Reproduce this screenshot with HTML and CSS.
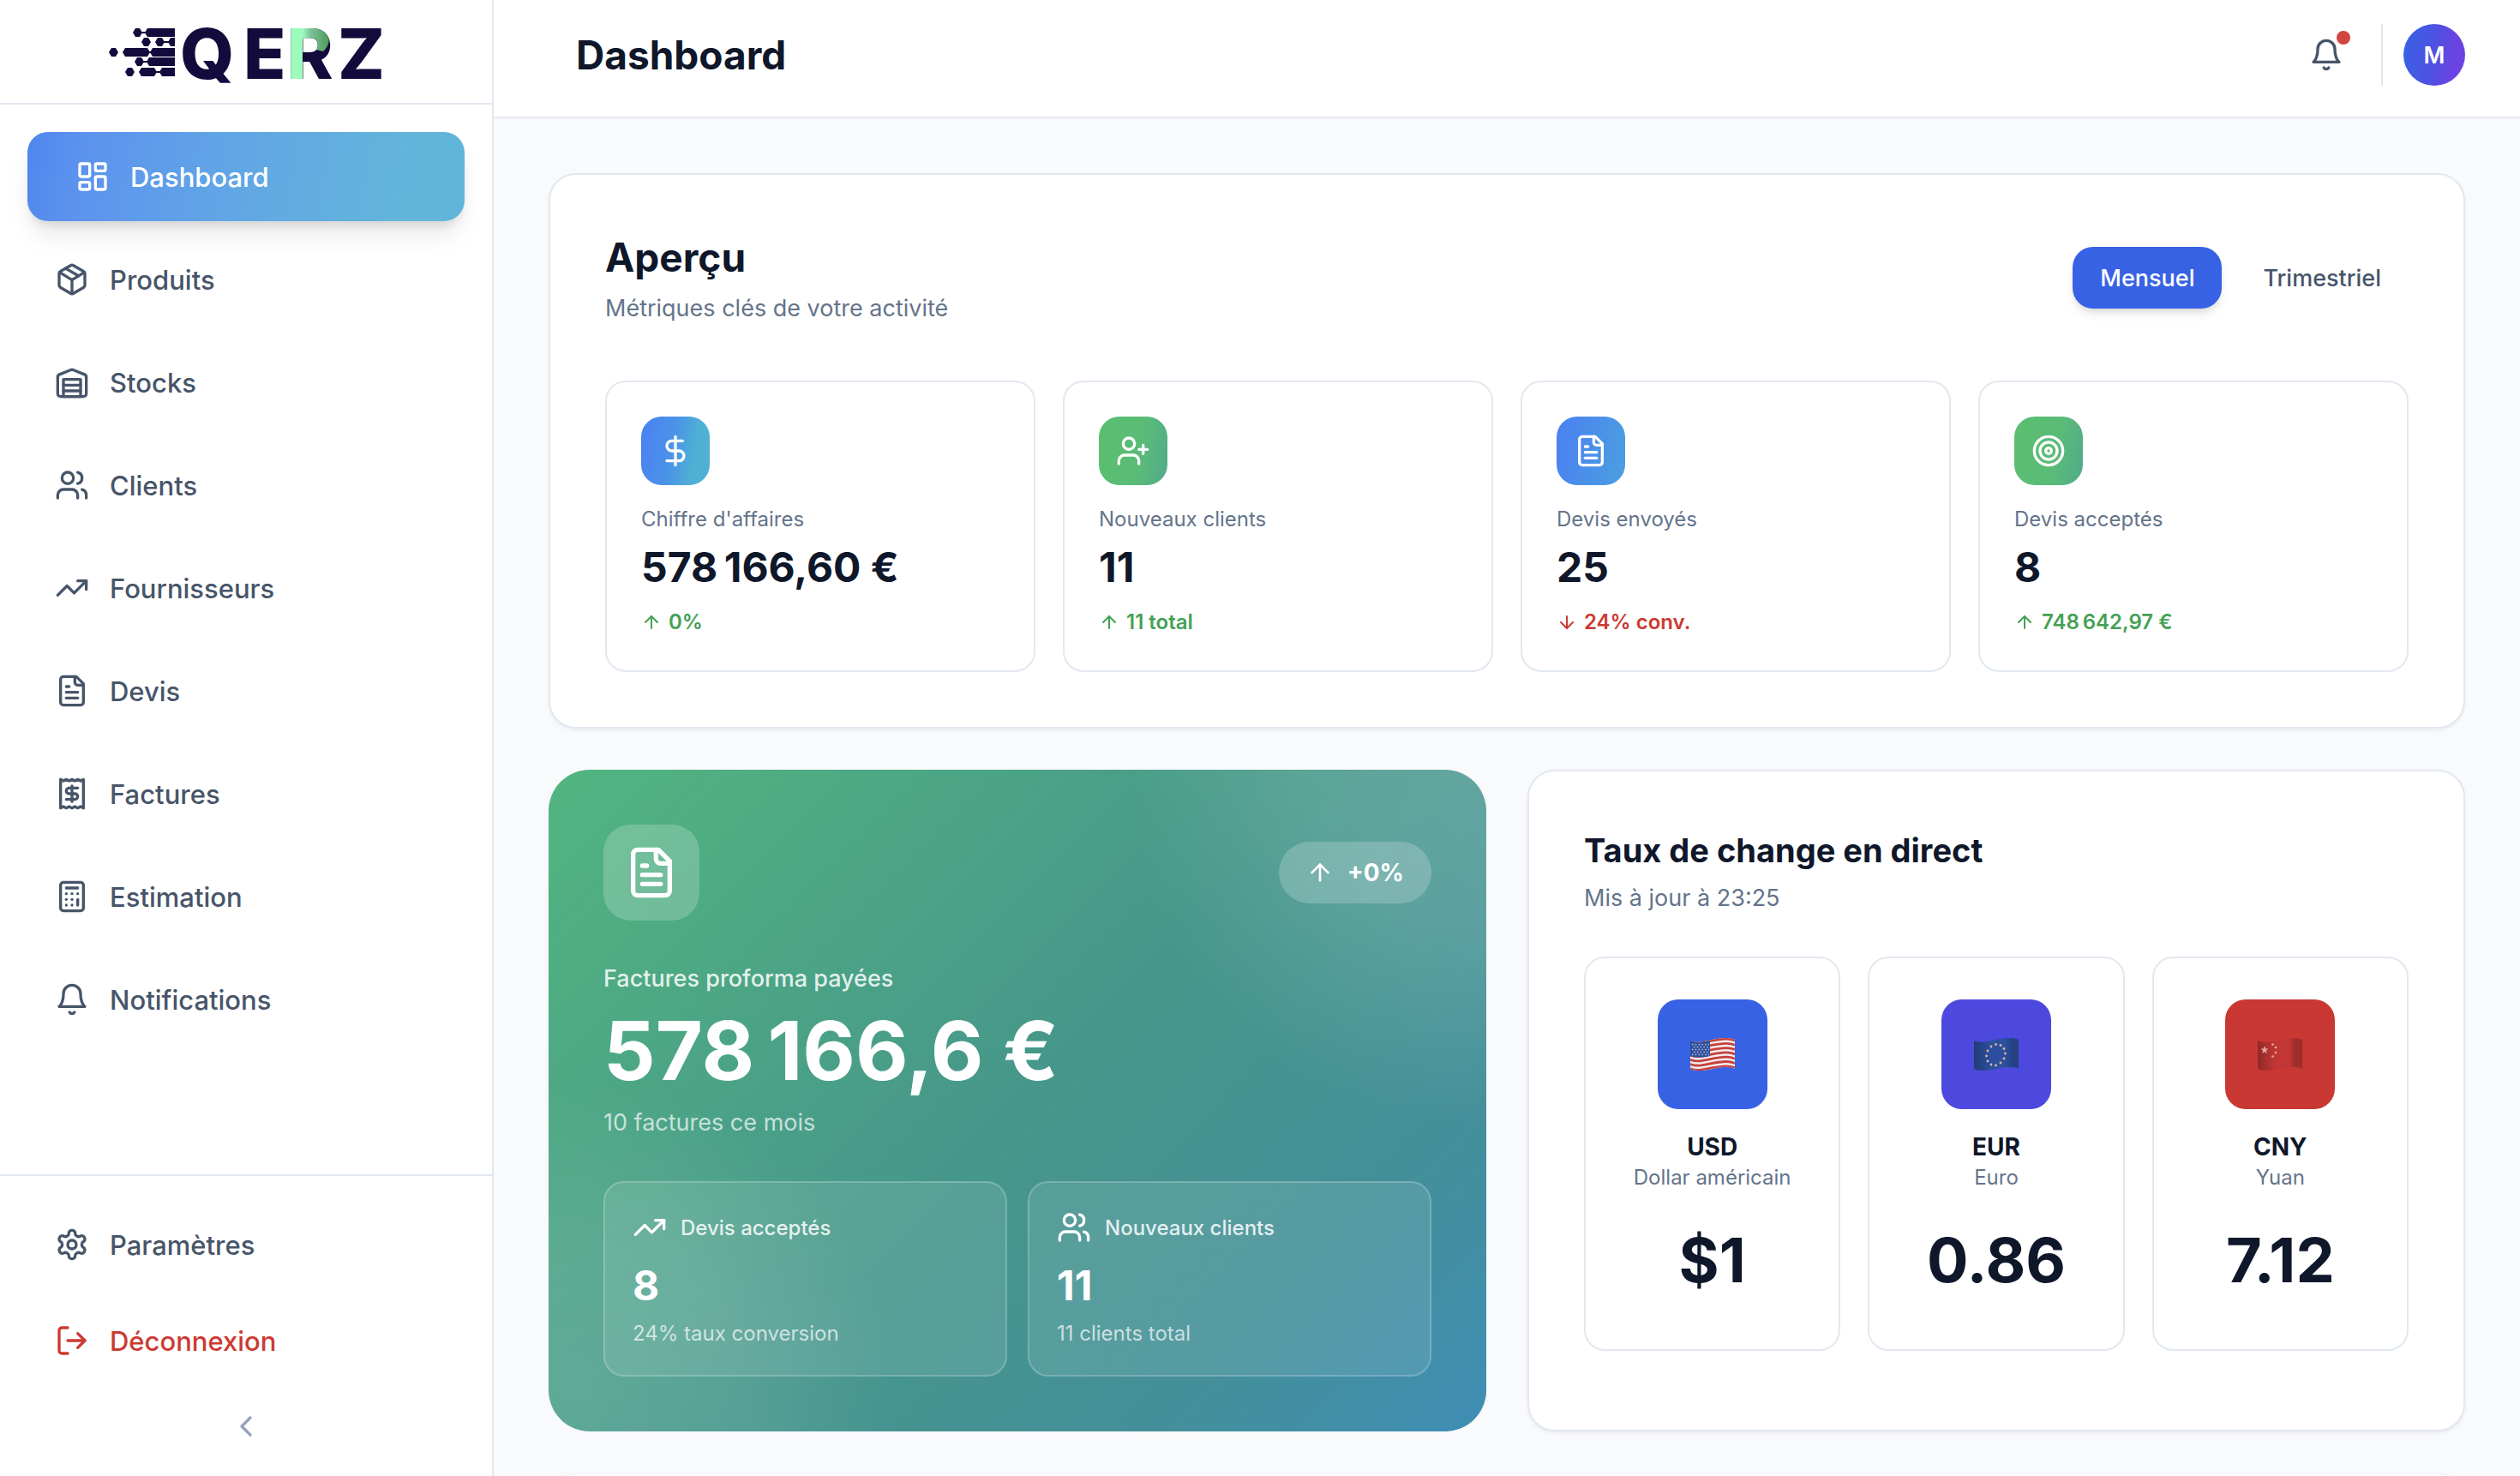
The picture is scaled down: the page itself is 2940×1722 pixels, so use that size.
FILE: index.html
```html
<!DOCTYPE html>
<html lang="fr">
<head>
  <meta charset="UTF-8" />
  <meta name="viewport" content="width=device-width, initial-scale=1.0" />
  <title>Dashboard - QERZ</title>
  <link rel="stylesheet" href="styles.css">
</head>
<body>

  <!-- Icons -->
  <svg class="sprite" aria-hidden="true">
    <symbol id="i-dashboard" viewBox="0 0 24 24"><rect width="7" height="9" x="3" y="3" rx="1"/><rect width="7" height="5" x="14" y="3" rx="1"/><rect width="7" height="9" x="14" y="12" rx="1"/><rect width="7" height="5" x="3" y="16" rx="1"/></symbol>
    <symbol id="i-package" viewBox="0 0 24 24"><path d="M11 21.73a2 2 0 0 0 2 0l7-4A2 2 0 0 0 21 16V8a2 2 0 0 0-1-1.73l-7-4a2 2 0 0 0-2 0l-7 4A2 2 0 0 0 3 8v8a2 2 0 0 0 1 1.73z"/><path d="M12 22V12"/><path d="m3.3 7 7.703 4.734a2 2 0 0 0 1.994 0L20.7 7"/><path d="m7.5 4.27 9 5.15"/></symbol>
    <symbol id="i-warehouse" viewBox="0 0 24 24"><path d="M22 8.35V20a2 2 0 0 1-2 2H4a2 2 0 0 1-2-2V8.35A2 2 0 0 1 3.26 6.5l8-3.2a2 2 0 0 1 1.48 0l8 3.2A2 2 0 0 1 22 8.35Z"/><path d="M6 18h12"/><path d="M6 14h12"/><rect width="12" height="12" x="6" y="10"/></symbol>
    <symbol id="i-users" viewBox="0 0 24 24"><path d="M16 21v-2a4 4 0 0 0-4-4H6a4 4 0 0 0-4 4v2"/><circle cx="9" cy="7" r="4"/><path d="M22 21v-2a4 4 0 0 0-3-3.87"/><path d="M16 3.13a4 4 0 0 1 0 7.75"/></symbol>
    <symbol id="i-trending" viewBox="0 0 24 24"><path d="M22 7 13.5 15.5 8.5 10.5 2 17"/><path d="M16 7h6v6"/></symbol>
    <symbol id="i-file" viewBox="0 0 24 24"><path d="M15 2H6a2 2 0 0 0-2 2v16a2 2 0 0 0 2 2h12a2 2 0 0 0 2-2V7Z"/><path d="M14 2v4a2 2 0 0 0 2 2h4"/><path d="M10 9H8"/><path d="M16 13H8"/><path d="M16 17H8"/></symbol>
    <symbol id="i-receipt" viewBox="0 0 24 24"><path d="M4 2v20l2-1 2 1 2-1 2 1 2-1 2 1 2-1 2 1V2l-2 1-2-1-2 1-2-1-2 1-2-1-2 1Z"/><path d="M16 8h-6a2 2 0 1 0 0 4h4a2 2 0 1 1 0 4H8"/><path d="M12 17.5v-11"/></symbol>
    <symbol id="i-calculator" viewBox="0 0 24 24"><rect width="16" height="20" x="4" y="2" rx="2"/><path d="M8 6h8"/><path d="M16 14v4"/><path d="M16 10h.01"/><path d="M12 10h.01"/><path d="M8 10h.01"/><path d="M12 14h.01"/><path d="M8 14h.01"/><path d="M12 18h.01"/><path d="M8 18h.01"/></symbol>
    <symbol id="i-bell" viewBox="0 0 24 24"><path d="M6 8a6 6 0 0 1 12 0c0 7 3 9 3 9H3s3-2 3-9"/><path d="M10.3 21a1.94 1.94 0 0 0 3.4 0"/></symbol>
    <symbol id="i-settings" viewBox="0 0 24 24"><path d="M12.22 2h-.44a2 2 0 0 0-2 2v.18a2 2 0 0 1-1 1.73l-.43.25a2 2 0 0 1-2 0l-.15-.08a2 2 0 0 0-2.73.73l-.22.38a2 2 0 0 0 .73 2.73l.15.1a2 2 0 0 1 1 1.72v.51a2 2 0 0 1-1 1.74l-.15.09a2 2 0 0 0-.73 2.73l.22.38a2 2 0 0 0 2.73.73l.15-.08a2 2 0 0 1 2 0l.43.25a2 2 0 0 1 1 1.73V20a2 2 0 0 0 2 2h.44a2 2 0 0 0 2-2v-.18a2 2 0 0 1 1-1.73l.43-.25a2 2 0 0 1 2 0l.15.08a2 2 0 0 0 2.73-.73l.22-.39a2 2 0 0 0-.73-2.73l-.15-.08a2 2 0 0 1-1-1.74v-.5a2 2 0 0 1 1-1.74l.15-.09a2 2 0 0 0 .73-2.73l-.22-.38a2 2 0 0 0-2.73-.73l-.15.08a2 2 0 0 1-2 0l-.43-.25a2 2 0 0 1-1-1.73V4a2 2 0 0 0-2-2z"/><circle cx="12" cy="12" r="3"/></symbol>
    <symbol id="i-logout" viewBox="0 0 24 24"><path d="M9 21H5a2 2 0 0 1-2-2V5a2 2 0 0 1 2-2h4"/><path d="m16 17 5-5-5-5"/><path d="M21 12H9"/></symbol>
    <symbol id="i-chevron" viewBox="0 0 24 24"><path d="m15 18-6-6 6-6"/></symbol>
    <symbol id="i-dollar" viewBox="0 0 24 24"><path d="M12 2v20"/><path d="M17 5H9.5a3.5 3.5 0 0 0 0 7h5a3.5 3.5 0 0 1 0 7H6"/></symbol>
    <symbol id="i-user-plus" viewBox="0 0 24 24"><path d="M16 21v-2a4 4 0 0 0-4-4H6a4 4 0 0 0-4 4v2"/><circle cx="9" cy="7" r="4"/><path d="M19 8v6"/><path d="M22 11h-6"/></symbol>
    <symbol id="i-target" viewBox="0 0 24 24"><circle cx="12" cy="12" r="10"/><circle cx="12" cy="12" r="6"/><circle cx="12" cy="12" r="2"/></symbol>
    <symbol id="i-up" viewBox="0 0 24 24"><path d="m5 12 7-7 7 7"/><path d="M12 19V5"/></symbol>
    <symbol id="i-down" viewBox="0 0 24 24"><path d="M12 5v14"/><path d="m19 12-7 7-7-7"/></symbol>
  </svg>

  <div class="layout">

    <aside class="sidebar">
      <div class="sidebar-logo">
        <svg class="logo" viewBox="0 0 316 62" role="img" aria-label="QERZ">
          <defs>
            <linearGradient id="rGrad" gradientUnits="userSpaceOnUse" x1="224" y1="0" x2="254" y2="0">
              <stop offset="0" stop-color="#9dfcbc"/>
              <stop offset="0.3" stop-color="#7cc49a"/>
              <stop offset="1" stop-color="#4f9a5c"/>
            </linearGradient>
            <clipPath id="rClip"><text class="logo-text" x="206" y="60">R</text></clipPath>
          </defs>
          <g fill="#120b3c">
            <path d="M29 1h5l3 5-3 5h-5l-3-5zM43 1h32v10H43l-3-5zM35 5h8v2h-8z"/>
            <path d="M39 12h5l3 5-3 5h-5l-3-5zM55 12h5l3 5-3 5h-5l-3-5zM70 12h5v10h-5l-3-5zM61 16h8v2h-8z"/>
            <path d="M1 24h5l3 5-3 5H1l-3-5zM17 24h26l3 5-3 5H17l-3-5zM49 24h26v10H49l-3-5zM45 28h4v2h-4z"/>
            <path d="M31 35h5l3 5-3 5h-5l-3-5zM45 35h30v10H45l-3-5zM37 39h6v2h-6z"/>
            <path d="M20 47h5l3 5-3 5h-5l-3-5zM36 47h15l3 5-3 5H36l-3-5zM60 47h15v10H60l-3-5zM52 51h6v2h-6z"/>
          </g>
          <text class="logo-text" x="81 155 206 265" y="60">QERZ</text>
          <g clip-path="url(#rClip)">
            <path fill="url(#rGrad)" d="M222 0h20c13 2 18 18 6 28l-8-2v-12h-20z"/>
            <rect x="204" y="0" width="20" height="62" fill="#9dfcbc"/>
          </g>
        </svg>
      </div>

      <nav class="nav">
        <a href="#" class="nav-link active"><svg class="icon"><use href="#i-dashboard"/></svg>Dashboard</a>
        <a href="#" class="nav-link"><svg class="icon"><use href="#i-package"/></svg>Produits</a>
        <a href="#" class="nav-link"><svg class="icon"><use href="#i-warehouse"/></svg>Stocks</a>
        <a href="#" class="nav-link"><svg class="icon"><use href="#i-users"/></svg>Clients</a>
        <a href="#" class="nav-link"><svg class="icon"><use href="#i-trending"/></svg>Fournisseurs</a>
        <a href="#" class="nav-link"><svg class="icon"><use href="#i-file"/></svg>Devis</a>
        <a href="#" class="nav-link"><svg class="icon"><use href="#i-receipt"/></svg>Factures</a>
        <a href="#" class="nav-link"><svg class="icon"><use href="#i-calculator"/></svg>Estimation</a>
        <a href="#" class="nav-link"><svg class="icon"><use href="#i-bell"/></svg>Notifications</a>
      </nav>

      <div class="sidebar-footer">
        <a href="#" class="nav-link"><svg class="icon"><use href="#i-settings"/></svg>Paramètres</a>
        <button type="button" class="nav-link logout"><svg class="icon"><use href="#i-logout"/></svg>Déconnexion</button>
        <button type="button" class="collapse-btn" aria-label="Réduire le menu"><svg class="icon"><use href="#i-chevron"/></svg></button>
      </div>
    </aside>

    <div class="content">
      <header class="topbar">
        <h1>Dashboard</h1>
        <div class="topbar-right">
          <button type="button" class="bell-btn" aria-label="Notifications">
            <svg class="icon"><use href="#i-bell"/></svg>
            <span class="bell-dot"></span>
          </button>
          <div class="user">
            <button type="button" class="avatar">M</button>
          </div>
        </div>
      </header>

      <main class="main">

        <section class="card">
          <div class="card-head">
            <div>
              <h2 class="title-lg">Aperçu</h2>
              <p class="subtitle">Métriques clés de votre activité</p>
            </div>
            <div class="period">
              <button type="button" class="period-btn selected">Mensuel</button>
              <button type="button" class="period-btn">Trimestriel</button>
            </div>
          </div>

          <div class="stats">
            <div class="stat">
              <div class="stat-icon cyan"><svg class="icon"><use href="#i-dollar"/></svg></div>
              <p class="stat-label">Chiffre d'affaires</p>
              <p class="stat-value">578&#8239;166,60&nbsp;€</p>
              <p class="stat-delta up"><svg class="icon"><use href="#i-up"/></svg>0%</p>
            </div>
            <div class="stat">
              <div class="stat-icon green"><svg class="icon"><use href="#i-user-plus"/></svg></div>
              <p class="stat-label">Nouveaux clients</p>
              <p class="stat-value">11</p>
              <p class="stat-delta up"><svg class="icon"><use href="#i-up"/></svg>11 total</p>
            </div>
            <div class="stat">
              <div class="stat-icon blue"><svg class="icon"><use href="#i-file"/></svg></div>
              <p class="stat-label">Devis envoyés</p>
              <p class="stat-value">25</p>
              <p class="stat-delta down"><svg class="icon"><use href="#i-down"/></svg>24% conv.</p>
            </div>
            <div class="stat">
              <div class="stat-icon green"><svg class="icon"><use href="#i-target"/></svg></div>
              <p class="stat-label">Devis acceptés</p>
              <p class="stat-value">8</p>
              <p class="stat-delta up"><svg class="icon"><use href="#i-up"/></svg>748&#8239;642,97&nbsp;€</p>
            </div>
          </div>
        </section>

        <div class="row">
          <section class="hero">
            <div class="hero-head">
              <div class="hero-icon"><svg class="icon"><use href="#i-file"/></svg></div>
              <span class="pill"><svg class="icon"><use href="#i-up"/></svg>+0%</span>
            </div>
            <p class="hero-label">Factures proforma payées</p>
            <p class="hero-value">578&#8239;166,6&nbsp;€</p>
            <p class="hero-note">10 factures ce mois</p>
            <div class="hero-grid">
              <div class="mini">
                <p class="mini-label"><svg class="icon"><use href="#i-trending"/></svg>Devis acceptés</p>
                <p class="mini-value">8</p>
                <p class="mini-note">24% taux conversion</p>
              </div>
              <div class="mini">
                <p class="mini-label"><svg class="icon"><use href="#i-users"/></svg>Nouveaux clients</p>
                <p class="mini-value">11</p>
                <p class="mini-note">11 clients total</p>
              </div>
            </div>
          </section>

          <section class="card">
            <h2 class="title-md">Taux de change en direct</h2>
            <p class="subtitle">Mis à jour à 23:25</p>

            <div class="rates">
              <div class="rate">
                <div class="flag usd">
                  <svg viewBox="0 0 52 38">
                    <defs>
                      <clipPath id="wave"><path d="M0 3C12 8 24 0 42 0Q48 0 52 2V36C40 30 26 38 12 38Q4 38 0 36Z"/></clipPath>
                      <path id="stripe" d="M0 4C12 9 24 1 42 1Q48 1 52 3"/>
                      <linearGradient id="fold">
                        <stop offset="0" stop-color="#000" stop-opacity="0.25"/>
                        <stop offset="0.4" stop-color="#000" stop-opacity="0"/>
                        <stop offset="0.7" stop-color="#000" stop-opacity="0"/>
                        <stop offset="0.85" stop-color="#000" stop-opacity="0.18"/>
                        <stop offset="1" stop-color="#000" stop-opacity="0.18"/>
                      </linearGradient>
                    </defs>
                    <g clip-path="url(#wave)">
                      <rect width="52" height="38" fill="#f1eeee"/>
                      <g fill="none" stroke="#c8403c" stroke-width="2.8">
                        <use href="#stripe"/><use href="#stripe" y="5.3"/><use href="#stripe" y="10.6"/><use href="#stripe" y="15.9"/><use href="#stripe" y="21.2"/><use href="#stripe" y="26.5"/><use href="#stripe" y="31.8"/>
                      </g>
                      <path fill="#2f4f9c" d="M0 2C8 6 14 5 23 3V21C14 23 8 23 0 21Z"/>
                      <g stroke="#c4cde6" stroke-width="1.4" stroke-dasharray="1.4 2.4">
                        <path d="M2 7.500H22M4 10.500H22M2 13.500H22M4 16.500H22M2 19.500H22"/>
                      </g>
                    </g>
                  </svg>
                </div>
                <p class="rate-code">USD</p>
                <p class="rate-name">Dollar américain</p>
                <p class="rate-value">$1</p>
              </div>
              <div class="rate">
                <div class="flag eur">
                  <svg viewBox="0 0 52 38">
                    <g clip-path="url(#wave)">
                      <rect width="52" height="38" fill="#2c509f"/>
                      <rect width="52" height="38" fill="url(#fold)"/>
                      <g fill="#dfb3a0">
                        <circle cx="25.500" cy="7.500" r="1.400"/><circle cx="31" cy="8.500" r="1.400"/><circle cx="35" cy="12.500" r="1.400"/><circle cx="36.500" cy="18" r="1.400"/><circle cx="35" cy="24" r="1.400"/><circle cx="31" cy="29" r="1.400"/><circle cx="25.500" cy="32" r="1.400"/><circle cx="20" cy="31" r="1.400"/><circle cx="16" cy="27" r="1.400"/><circle cx="14.500" cy="21" r="1.400"/><circle cx="16" cy="15" r="1.400"/><circle cx="20" cy="10" r="1.400"/>
                      </g>
                    </g>
                  </svg>
                </div>
                <p class="rate-code">EUR</p>
                <p class="rate-name">Euro</p>
                <p class="rate-value">0.86</p>
              </div>
              <div class="rate">
                <div class="flag cny">
                  <svg viewBox="0 0 52 38">
                    <g clip-path="url(#wave)">
                      <rect width="52" height="38" fill="#c23735"/>
                      <rect width="52" height="38" fill="url(#fold)"/>
                      <g fill="#e9ab98">
                        <path d="M8 9l1.200 3.400h3.400l-2.700 2.200 1 3.400L8 16l-2.900 2 1-3.400-2.700-2.200h3.400z"/>
                        <circle cx="17.500" cy="7.500" r="1.300"/><circle cx="21" cy="11" r="1.300"/><circle cx="21" cy="17" r="1.300"/><circle cx="17.500" cy="21.500" r="1.300"/>
                      </g>
                    </g>
                  </svg>
                </div>
                <p class="rate-code">CNY</p>
                <p class="rate-name">Yuan</p>
                <p class="rate-value">7.12</p>
              </div>
            </div>
          </section>
        </div>

        <section class="card card-next"></section>

      </main>
    </div>
  </div>

</body>
</html>
```
FILE: styles.css
```css
* {
  box-sizing: border-box;
}

body {
  margin: 0;
  font-family: Inter, "Liberation Sans", sans-serif;
  color: #0f172a;
  background-color: #f9fafc;
}

h1, h2, p {
  margin: 0;
}

button {
  font-family: inherit;
  border: none;
  background: none;
  padding: 0;
  cursor: pointer;
}

.sprite {
  display: none;
}

.icon {
  width: 40px;
  height: 40px;
  flex-shrink: 0;
  fill: none;
  stroke: currentColor;
  stroke-width: 2;
  stroke-linecap: round;
  stroke-linejoin: round;
}

.layout {
  display: flex;
  height: 100vh;
  overflow: hidden;
}

/* Sidebar */
.sidebar {
  width: 576px;
  flex-shrink: 0;
  display: flex;
  flex-direction: column;
  background-color: #fff;
  border-right: 2px solid #e2e8f0;
}

.sidebar-logo {
  display: flex;
  justify-content: center;
  padding: 32px 0 26px;
  border-bottom: 2px solid #e2e8f0;
}

.logo {
  width: 316px;
  height: 62px;
  overflow: visible;
}

.logo-text {
  font-family: Inter, sans-serif;
  font-size: 81px;
  font-weight: 800;
  fill: #120b3c;
}

.nav {
  flex: 1;
  display: flex;
  flex-direction: column;
  gap: 16px;
  padding: 32px;
}

.nav-link {
  display: flex;
  align-items: center;
  gap: 24px;
  height: 104px;
  padding: 0 32px;
  border-radius: 24px;
  font-size: 31px;
  font-weight: 500;
  color: #475569;
  text-decoration: none;
}

.nav-link.active {
  padding: 0 56px;
  color: #fff;
  background: linear-gradient(100deg, #4f86ee, #5c92ee 12%, #61a5e6 45%, #62b5da 85%, #60b5d8);
  box-shadow: 0 20px 30px -6px rgba(0, 0, 0, 0.1), 0 8px 12px -4px rgba(0, 0, 0, 0.1);
}

.sidebar-footer {
  display: flex;
  flex-direction: column;
  gap: 16px;
  padding: 32px 32px 22px;
  border-top: 2px solid #e2e8f0;
}

.sidebar-footer .nav-link {
  height: 96px;
}

.nav-link.logout {
  color: #cb3a33;
}

.collapse-btn {
  display: flex;
  justify-content: center;
  padding: 16px;
  color: #94a3b8;
}

/* Topbar */
.content {
  flex: 1;
  min-width: 0;
  display: flex;
  flex-direction: column;
}

.topbar {
  display: flex;
  justify-content: space-between;
  align-items: center;
  padding: 24px 64px 32px 96px;
  background-color: #fff;
  border-bottom: 2px solid #e2e8f0;
}

.topbar h1 {
  font-size: 46px;
  line-height: 64px;
  font-weight: 700;
}

.topbar-right {
  display: flex;
  align-items: center;
  gap: 24px;
}

.bell-btn {
  position: relative;
  display: flex;
  align-items: center;
  justify-content: center;
  width: 80px;
  height: 80px;
  color: #475569;
}

.bell-dot {
  position: absolute;
  top: 12px;
  right: 12px;
  width: 16px;
  height: 16px;
  border-radius: 50%;
  background-color: #d0453f;
}

.user {
  padding-left: 24px;
  border-left: 2px solid #e2e8f0;
}

.avatar {
  display: block;
  width: 72px;
  height: 72px;
  border-radius: 50%;
  background: linear-gradient(100deg, #3663e4, #4f50e2 50%, #6b43e2 80%);
  color: #fff;
  font-size: 27px;
  font-weight: 600;
}

/* Cards */
.main {
  flex: 1;
  min-height: 0;
  overflow: hidden;
  padding: 64px;
}

.card {
  padding: 64px;
  background-color: #fff;
  border: 2px solid #e2e8f0;
  border-radius: 32px;
  box-shadow: 0 2px 4px rgba(0, 0, 0, 0.06);
}

.card-next {
  border-color: #f1f4f8;
}

.card-head {
  display: flex;
  justify-content: space-between;
  align-items: center;
  margin-bottom: 64px;
}

.title-lg {
  font-size: 46px;
  line-height: 64px;
  font-weight: 700;
}

.title-md {
  font-size: 38px;
  line-height: 56px;
  font-weight: 700;
}

.subtitle {
  margin-top: 8px;
  font-size: 27px;
  line-height: 40px;
  color: #64748b;
}

.period {
  display: flex;
  gap: 16px;
}

.period-btn {
  height: 72px;
  padding: 0 32px;
  border-radius: 24px;
  font-size: 27px;
  font-weight: 500;
  color: #475569;
}

.period-btn.selected {
  color: #fff;
  background-color: #3862e4;
  box-shadow: 0 8px 12px -2px rgba(0, 0, 0, 0.1), 0 4px 8px -4px rgba(0, 0, 0, 0.1);
}

.stats {
  display: grid;
  grid-template-columns: repeat(4, 1fr);
  gap: 32px;
}

.stat {
  padding: 40px;
  border: 2px solid #e2e8f0;
  border-radius: 24px;
}

.stat-icon {
  display: flex;
  align-items: center;
  justify-content: center;
  width: 80px;
  height: 80px;
  margin-bottom: 24px;
  border-radius: 24px;
  color: #fff;
}

.stat-icon.cyan {
  background: linear-gradient(100deg, #4b80f2, #4a93e8 45%, #4fb0d4 75%, #4fb0d2);
}

.stat-icon.blue {
  background: linear-gradient(100deg, #4b80f2, #4a9fe0);
}

.stat-icon.green {
  background: linear-gradient(100deg, #5abf70, #5abb77 60%, #52ab8c);
}

.stat-label {
  font-size: 24px;
  line-height: 32px;
  color: #64748b;
}

.stat-value {
  margin: 8px 0 16px;
  font-size: 48px;
  line-height: 64px;
  font-weight: 700;
}

.stat-delta {
  display: flex;
  align-items: center;
  gap: 8px;
  font-size: 24px;
  line-height: 32px;
  font-weight: 600;
}

.stat-delta .icon {
  width: 24px;
  height: 24px;
}

.stat-delta.up {
  color: #44a155;
}

.stat-delta.down {
  color: #cb3a33;
}

.row {
  display: grid;
  grid-template-columns: 1fr 1fr;
  gap: 48px;
  margin: 48px 0;
}

/* Proforma card */
.hero {
  padding: 64px;
  border-radius: 48px;
  color: #fff;
  background:
    radial-gradient(circle at 100% 0, rgba(255, 255, 255, 0.16), rgba(255, 255, 255, 0.12) 200px, transparent 420px),
    radial-gradient(circle at 4% 94%, rgba(255, 255, 255, 0.13), rgba(255, 255, 255, 0.09) 180px, transparent 360px),
    linear-gradient(135deg, #52b580, #46978a 50%, #438f9a 80%, #3f8eb5);
}

.hero-head {
  display: flex;
  justify-content: space-between;
  align-items: center;
  margin-bottom: 48px;
}

.hero-icon {
  display: flex;
  align-items: center;
  justify-content: center;
  width: 112px;
  height: 112px;
  border-radius: 32px;
  background-color: rgba(255, 255, 255, 0.2);
}

.hero-icon .icon {
  width: 64px;
  height: 64px;
}

.pill {
  display: flex;
  align-items: center;
  gap: 16px;
  height: 72px;
  padding: 0 32px;
  border-radius: 36px;
  background-color: rgba(255, 255, 255, 0.2);
  font-size: 28px;
  font-weight: 700;
}

.pill .icon {
  width: 32px;
  height: 32px;
}

.hero-label {
  font-size: 27px;
  line-height: 40px;
  font-weight: 500;
  color: rgba(255, 255, 255, 0.85);
}

.hero-value {
  margin: 16px 0;
  font-size: 95px;
  line-height: 96px;
  font-weight: 700;
}

.hero-note {
  font-size: 27px;
  line-height: 40px;
  color: rgba(255, 255, 255, 0.7);
}

.hero-grid {
  display: grid;
  grid-template-columns: 1fr 1fr;
  gap: 24px;
  margin-top: 48px;
}

.mini {
  padding: 32px;
  border: 2px solid rgba(255, 255, 255, 0.2);
  border-radius: 24px;
  background-color: rgba(255, 255, 255, 0.1);
}

.mini-label {
  display: flex;
  align-items: center;
  gap: 16px;
  font-size: 24px;
  font-weight: 500;
  color: rgba(255, 255, 255, 0.85);
}

.mini-label .icon {
  color: #fff;
}

.mini-value {
  margin: 16px 0 8px;
  font-size: 48px;
  line-height: 64px;
  font-weight: 700;
}

.mini-note {
  font-size: 24px;
  line-height: 32px;
  color: rgba(255, 255, 255, 0.7);
}

/* Exchange rates */
.rates {
  display: grid;
  grid-template-columns: repeat(3, 1fr);
  gap: 32px;
  margin-top: 48px;
}

.rate {
  display: flex;
  flex-direction: column;
  align-items: center;
  padding: 48px 32px 64px;
  border: 2px solid #e2e8f0;
  border-radius: 24px;
  text-align: center;
}

.flag {
  display: flex;
  align-items: center;
  justify-content: center;
  width: 128px;
  height: 128px;
  margin-bottom: 24px;
  border-radius: 24px;
}

.flag svg {
  width: 52px;
  height: 38px;
}

.flag.usd {
  background-color: #3862e4;
}

.flag.eur {
  background-color: #4e49de;
}

.flag.cny {
  background-color: #ca3833;
}

.rate-code {
  font-size: 28px;
  line-height: 40px;
  font-weight: 700;
}

.rate-name {
  font-size: 24px;
  line-height: 32px;
  color: #64748b;
}

.rate-value {
  margin-top: 40px;
  font-size: 72px;
  line-height: 80px;
  font-weight: 700;
}
```
